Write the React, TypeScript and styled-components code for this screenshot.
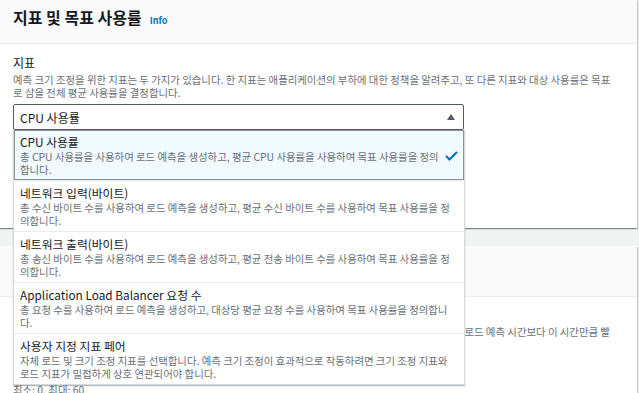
import React from "react";
import styled, { createGlobalStyle, css } from "styled-components";

interface MetricOption {
  title: string;
  description: string;
}

const options: MetricOption[] = [
  {
    title: "CPU 사용률",
    description:
      "총 CPU 사용률을 사용하여 로드 예측을 생성하고, 평균 CPU 사용률을 사용하여 목표 사용률을 정의합니다.",
  },
  {
    title: "네트워크 입력(바이트)",
    description:
      "총 수신 바이트 수를 사용하여 로드 예측을 생성하고, 평균 수신 바이트 수를 사용하여 목표 사용률을 정의합니다.",
  },
  {
    title: "네트워크 출력(바이트)",
    description:
      "총 송신 바이트 수를 사용하여 로드 예측을 생성하고, 평균 전송 바이트 수를 사용하여 목표 사용률을 정의합니다.",
  },
  {
    title: "Application Load Balancer 요청 수",
    description:
      "총 요청 수를 사용하여 로드 예측을 생성하고, 대상당 평균 요청 수를 사용하여 목표 사용률을 정의합니다.",
  },
  {
    title: "사용자 지정 지표 페어",
    description:
      "자체 로드 및 크기 조정 지표를 선택합니다. 예측 크기 조정이 효과적으로 작동하려면 크기 조정 지표와 로드 지표가 밀접하게 상호 연관되어야 합니다.",
  },
];

const GlobalStyle = createGlobalStyle`
  body {
    margin: 0;
    background: #f2f3f3;
    font-family: "Noto Sans CJK KR", "Noto Sans", sans-serif;
    color: #16191f;
    overflow: hidden;
  }
`;

const Page = styled.div`
  display: flex;
  flex-direction: column;
  gap: 18px;
  padding-right: 2px;
`;

const Card = styled.section`
  background: #ffffff;
  box-shadow: 0 1px 1px 0 rgba(0, 28, 36, 0.3), 1px 1px 1px 0 rgba(0, 28, 36, 0.15),
    -1px 1px 1px 0 rgba(0, 28, 36, 0.15);
`;

const CardHeader = styled.div<{ $tall?: boolean }>`
  background: #fafafa;
  border-bottom: 1px solid #eaeded;
  padding: ${(p) => (p.$tall ? "9px 13px 8px" : "7px 13px 16px")};
`;

const Heading = styled.h2`
  margin: 0;
  height: 20px;
  display: flex;
  align-items: baseline;
  gap: 8px;
  font-size: 16px;
  line-height: 20px;
  font-weight: 700;
`;

const InfoLink = styled.a`
  color: #0073bb;
  font-size: 9px;
  line-height: 20px;
  font-weight: 700;
  text-decoration: none;
`;

const HeaderDesc = styled.p`
  margin: 0;
  font-size: 10.4px;
  line-height: 13px;
  color: #687078;
`;

const CardBody = styled.div<{ $pt: number; $pb: number }>`
  padding: ${(p) => p.$pt}px 13px ${(p) => p.$pb}px;
  display: flex;
  flex-direction: column;
  gap: 18px;
`;

const Field = styled.div`
  display: flex;
  flex-direction: column;
`;

const Label = styled.div`
  font-size: 12px;
  line-height: 16px;
`;

const Description = styled.p`
  margin: 2px 0 0;
  max-width: 606px;
  font-size: 10.4px;
  line-height: 13px;
  color: #687078;
  word-break: break-all;
`;

const Constraint = styled(Description)`
  margin-top: 1px;
`;

const SelectWrap = styled.div`
  position: relative;
  width: 451px;
  margin-top: 5px;
`;

const SelectBox = styled.div`
  box-sizing: border-box;
  height: 26px;
  border: 1px solid #545b64;
  border-radius: 2px;
  padding: 0 8px 0 6px;
  display: flex;
  align-items: center;
  justify-content: space-between;
  font-size: 12px;
  background: #ffffff;
`;

const Input = styled.div`
  box-sizing: border-box;
  width: 451px;
  height: 26px;
  margin-top: 5px;
  border: 1px solid #aab7b8;
  border-radius: 2px;
`;

const Dropdown = styled.ul`
  position: absolute;
  top: 100%;
  left: 0;
  right: -1px;
  margin: 0;
  padding: 0;
  list-style: none;
  background: #ffffff;
  border: 1px solid #d5dbdb;
  border-top: none;
  box-shadow: 0 1px 1px 0 rgba(0, 28, 36, 0.3);
  z-index: 10;
`;

const Option = styled.li<{ $selected?: boolean }>`
  position: relative;
  padding: 4px 6px 4px 6px;
  & + & {
    border-top: 1px solid #eaeded;
  }
  ${(p) =>
    p.$selected &&
    css`
      background: #f1faff;
      box-shadow: inset 0 0 0 1px #879596;
      padding-right: 21px;
    `}
`;

const OptionTitle = styled.div`
  font-size: 11.8px;
  line-height: 16px;
`;

const OptionDesc = styled.div`
  font-size: 10.4px;
  line-height: 13px;
  color: #687078;
  word-break: break-all;
`;

const Check = styled.svg`
  position: absolute;
  right: 6px;
  top: 21px;
`;

const Home = () => {
  return (
    <Page>
      <GlobalStyle />
      <Card>
        <CardHeader>
          <Heading>
            지표 및 목표 사용률 <InfoLink href="#">Info</InfoLink>
          </Heading>
        </CardHeader>
        <CardBody $pt={11} $pb={18}>
          <Field>
            <Label>지표</Label>
            <Description>
              예측 크기 조정을 위한 지표는 두 가지가 있습니다. 한 지표는 애플리케이션의 부하에 대한 정책을 알려주고, 또 다른 지표와 대상 사용률은 목표로 삼을 전체 평균 사용률을 결정합니다.
            </Description>
            <SelectWrap>
              <SelectBox>
                <span>CPU 사용률</span>
                <svg width="8" height="6" viewBox="0 0 8 6">
                  <polygon points="0,6 4,0 8,6" fill="#545b64" />
                </svg>
              </SelectBox>
              <Dropdown>
                {options.map((opt, index) => (
                  <Option key={index} $selected={index === 0}>
                    <OptionTitle>{opt.title}</OptionTitle>
                    <OptionDesc>{opt.description}</OptionDesc>
                    {index === 0 && (
                      <Check width="13" height="10" viewBox="0 0 13 10">
                        <polyline points="1,5 4.5,8.5 12,1" fill="none" stroke="#0073bb" strokeWidth="2" />
                      </Check>
                    )}
                  </Option>
                ))}
              </Dropdown>
            </SelectWrap>
          </Field>
          <Field>
            <Label>목표 사용률</Label>
            <Description>목표로 삼을 평균 사용률을 입력합니다.</Description>
            <Input />
          </Field>
        </CardBody>
      </Card>
      <Card>
        <CardHeader $tall>
          <Heading>추가 설정</Heading>
          <HeaderDesc>예측 크기 조정 정책의 추가 옵션을 구성합니다.</HeaderDesc>
        </CardHeader>
        <CardBody $pt={10} $pb={16}>
          <Field>
            <Label>인스턴스 사전 시작 - 선택 사항</Label>
            <Description>
              인스턴스가 시작되어 트래픽을 처리할 준비가 되는데 걸리는 시간을 고려하여 미리 조정합니다. 인스턴스는 로드 예측 시간보다 이 시간만큼 빨리 시작됩니다.
            </Description>
            <Input />
            <Constraint>최소: 0, 최대: 60</Constraint>
          </Field>
        </CardBody>
      </Card>
    </Page>
  );
};

export default Home;
